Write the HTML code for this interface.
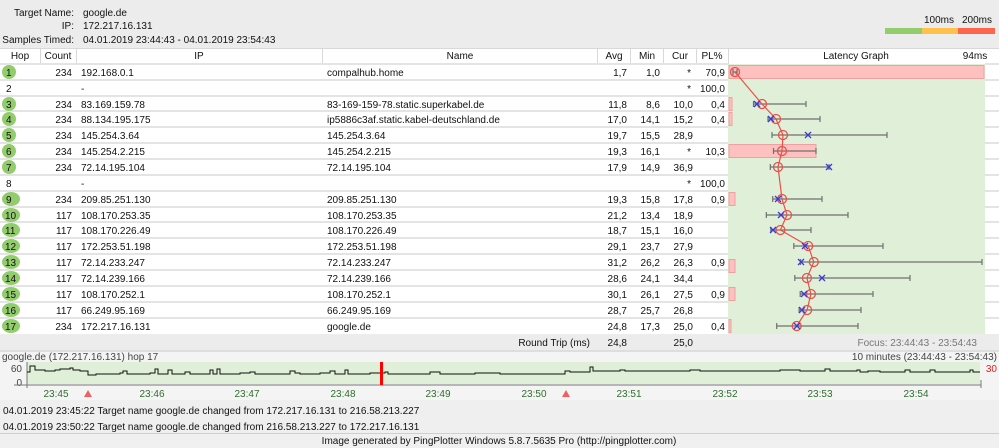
<!DOCTYPE html>
<html><head><meta charset="utf-8"><style>
html,body{margin:0;padding:0;background:#ececec;}
svg{display:block;font-family:"Liberation Sans",Arial,sans-serif;font-size:10px;}
</style></head><body>
<svg width="999" height="448" viewBox="0 0 999 448" xmlns="http://www.w3.org/2000/svg">
<rect width="999" height="448" fill="#ececec"/>
<!-- header info -->
<g fill="#111">
<text x="74" y="16" text-anchor="end">Target Name:</text><text x="83" y="16">google.de</text>
<text x="74" y="29" text-anchor="end">IP:</text><text x="83" y="29">172.217.16.131</text>
<text x="74" y="43" text-anchor="end">Samples Timed:</text><text x="83" y="43">04.01.2019 23:44:43 - 04.01.2019 23:54:43</text>
<text x="939" y="23" text-anchor="middle">100ms</text><text x="977" y="23" text-anchor="middle">200ms</text>
</g>
<rect x="885" y="28" width="37" height="6" fill="#92cc6c"/><rect x="922" y="28" width="36" height="6" fill="#ffc04c"/><rect x="958" y="28" width="37" height="6" fill="#ff644c"/>
<!-- table header -->
<rect x="0" y="48" width="999" height="16" fill="#fff"/>
<line x1="0" y1="48.5" x2="999" y2="48.5" stroke="#d8d8d8"/>
<g stroke="#d8d8d8"><line x1="40.5" y1="48" x2="40.5" y2="64"/><line x1="76.5" y1="48" x2="76.5" y2="64"/><line x1="322.5" y1="48" x2="322.5" y2="64"/><line x1="597.5" y1="48" x2="597.5" y2="64"/><line x1="630.5" y1="48" x2="630.5" y2="64"/><line x1="663.5" y1="48" x2="663.5" y2="64"/><line x1="696.5" y1="48" x2="696.5" y2="64"/><line x1="728.5" y1="48" x2="728.5" y2="64"/></g>
<g fill="#111" text-anchor="middle">
<text x="20" y="59">Hop</text><text x="58" y="59">Count</text><text x="199" y="59">IP</text><text x="460" y="59">Name</text><text x="614" y="59">Avg</text><text x="647" y="59">Min</text><text x="680" y="59">Cur</text><text x="712" y="59">PL%</text><text x="856" y="59">Latency Graph</text><text x="975" y="59">94ms</text>
</g>
<!-- body -->
<rect x="0" y="64" width="999" height="270" fill="#fff"/>
<rect x="728" y="64" width="257" height="270" fill="#e0f0d8"/>
<g stroke="#e4e4e4" stroke-width="2">
<line x1="0" y1="64" x2="728" y2="64"/><line x1="0" y1="80" x2="728" y2="80"/><line x1="0" y1="96" x2="728" y2="96"/><line x1="0" y1="111" x2="728" y2="111"/><line x1="0" y1="127" x2="728" y2="127"/><line x1="0" y1="143" x2="728" y2="143"/><line x1="0" y1="159" x2="728" y2="159"/><line x1="0" y1="175" x2="728" y2="175"/><line x1="0" y1="191" x2="728" y2="191"/><line x1="0" y1="207" x2="728" y2="207"/><line x1="0" y1="222" x2="728" y2="222"/><line x1="0" y1="238" x2="728" y2="238"/><line x1="0" y1="254" x2="728" y2="254"/><line x1="0" y1="270" x2="728" y2="270"/><line x1="0" y1="286" x2="728" y2="286"/><line x1="0" y1="302" x2="728" y2="302"/><line x1="0" y1="318" x2="728" y2="318"/>
<line x1="985" y1="64" x2="999" y2="64"/><line x1="985" y1="80" x2="999" y2="80"/><line x1="985" y1="96" x2="999" y2="96"/><line x1="985" y1="111" x2="999" y2="111"/><line x1="985" y1="127" x2="999" y2="127"/><line x1="985" y1="143" x2="999" y2="143"/><line x1="985" y1="159" x2="999" y2="159"/><line x1="985" y1="175" x2="999" y2="175"/><line x1="985" y1="191" x2="999" y2="191"/><line x1="985" y1="207" x2="999" y2="207"/><line x1="985" y1="222" x2="999" y2="222"/><line x1="985" y1="238" x2="999" y2="238"/><line x1="985" y1="254" x2="999" y2="254"/><line x1="985" y1="270" x2="999" y2="270"/><line x1="985" y1="286" x2="999" y2="286"/><line x1="985" y1="302" x2="999" y2="302"/><line x1="985" y1="318" x2="999" y2="318"/>
</g>
<!-- hop circles -->
<g fill="#92cc6c">
<ellipse cx="9" cy="72" rx="7" ry="7"/><ellipse cx="9" cy="104" rx="7" ry="7"/><ellipse cx="9" cy="119" rx="7" ry="7"/><ellipse cx="9" cy="135" rx="7" ry="7"/><ellipse cx="9" cy="151" rx="7" ry="7"/><ellipse cx="9" cy="167" rx="7" ry="7"/><ellipse cx="11" cy="199" rx="9" ry="7"/><ellipse cx="11" cy="215" rx="9" ry="7"/><ellipse cx="11" cy="230" rx="9" ry="7"/><ellipse cx="11" cy="246" rx="9" ry="7"/><ellipse cx="11" cy="262" rx="9" ry="7"/><ellipse cx="11" cy="278" rx="9" ry="7"/><ellipse cx="11" cy="294" rx="9" ry="7"/><ellipse cx="11" cy="310" rx="9" ry="7"/><ellipse cx="11" cy="326" rx="9" ry="7"/>
</g>
<g fill="#111">
<text x="6" y="76">1</text><text x="6" y="92">2</text><text x="6" y="108">3</text><text x="6" y="123">4</text><text x="6" y="139">5</text><text x="6" y="155">6</text><text x="6" y="171">7</text><text x="6" y="187">8</text><text x="6" y="203">9</text><text x="5" y="219">10</text><text x="5" y="234">11</text><text x="5" y="250">12</text><text x="5" y="266">13</text><text x="5" y="282">14</text><text x="5" y="298">15</text><text x="5" y="314">16</text><text x="5" y="330">17</text>
</g>
<g fill="#111" text-anchor="end">
<text x="72" y="76">234</text><text x="72" y="108">234</text><text x="72" y="123">234</text><text x="72" y="139">234</text><text x="72" y="155">234</text><text x="72" y="171">234</text><text x="72" y="203">234</text><text x="72" y="219">117</text><text x="72" y="234">117</text><text x="72" y="250">117</text><text x="72" y="266">117</text><text x="72" y="282">117</text><text x="72" y="298">117</text><text x="72" y="314">117</text><text x="72" y="330">234</text>
</g>
<g fill="#111">
<text x="81" y="76">192.168.0.1</text><text x="81" y="92">-</text><text x="81" y="108">83.169.159.78</text><text x="81" y="123">88.134.195.175</text><text x="81" y="139">145.254.3.64</text><text x="81" y="155">145.254.2.215</text><text x="81" y="171">72.14.195.104</text><text x="81" y="187">-</text><text x="81" y="203">209.85.251.130</text><text x="81" y="219">108.170.253.35</text><text x="81" y="234">108.170.226.49</text><text x="81" y="250">172.253.51.198</text><text x="81" y="266">72.14.233.247</text><text x="81" y="282">72.14.239.166</text><text x="81" y="298">108.170.252.1</text><text x="81" y="314">66.249.95.169</text><text x="81" y="330">172.217.16.131</text>
<text x="327" y="76">compalhub.home</text><text x="327" y="108">83-169-159-78.static.superkabel.de</text><text x="327" y="123">ip5886c3af.static.kabel-deutschland.de</text><text x="327" y="139">145.254.3.64</text><text x="327" y="155">145.254.2.215</text><text x="327" y="171">72.14.195.104</text><text x="327" y="203">209.85.251.130</text><text x="327" y="219">108.170.253.35</text><text x="327" y="234">108.170.226.49</text><text x="327" y="250">172.253.51.198</text><text x="327" y="266">72.14.233.247</text><text x="327" y="282">72.14.239.166</text><text x="327" y="298">108.170.252.1</text><text x="327" y="314">66.249.95.169</text><text x="327" y="330">google.de</text>
</g>
<g fill="#111" text-anchor="end">
<text x="627" y="76">1,7</text><text x="660" y="76">1,0</text><text x="691" y="76">*</text><text x="725" y="76">70,9</text>
<text x="691" y="92">*</text><text x="725" y="92">100,0</text>
<text x="627" y="108">11,8</text><text x="660" y="108">8,6</text><text x="693" y="108">10,0</text><text x="725" y="108">0,4</text>
<text x="627" y="123">17,0</text><text x="660" y="123">14,1</text><text x="693" y="123">15,2</text><text x="725" y="123">0,4</text>
<text x="627" y="139">19,7</text><text x="660" y="139">15,5</text><text x="693" y="139">28,9</text>
<text x="627" y="155">19,3</text><text x="660" y="155">16,1</text><text x="691" y="155">*</text><text x="725" y="155">10,3</text>
<text x="627" y="171">17,9</text><text x="660" y="171">14,9</text><text x="693" y="171">36,9</text>
<text x="691" y="187">*</text><text x="725" y="187">100,0</text>
<text x="627" y="203">19,3</text><text x="660" y="203">15,8</text><text x="693" y="203">17,8</text><text x="725" y="203">0,9</text>
<text x="627" y="219">21,2</text><text x="660" y="219">13,4</text><text x="693" y="219">18,9</text>
<text x="627" y="234">18,7</text><text x="660" y="234">15,1</text><text x="693" y="234">16,0</text>
<text x="627" y="250">29,1</text><text x="660" y="250">23,7</text><text x="693" y="250">27,9</text>
<text x="627" y="266">31,2</text><text x="660" y="266">26,2</text><text x="693" y="266">26,3</text><text x="725" y="266">0,9</text>
<text x="627" y="282">28,6</text><text x="660" y="282">24,1</text><text x="693" y="282">34,4</text>
<text x="627" y="298">30,1</text><text x="660" y="298">26,1</text><text x="693" y="298">27,5</text><text x="725" y="298">0,9</text>
<text x="627" y="314">28,7</text><text x="660" y="314">25,7</text><text x="693" y="314">26,8</text>
<text x="627" y="330">24,8</text><text x="660" y="330">17,3</text><text x="693" y="330">25,0</text><text x="725" y="330">0,4</text>
</g>
<!-- latency graph -->
<g fill="#ffc0c0" stroke="#f0a0a0">
<rect x="729" y="65.5" width="255" height="13"/><rect x="729" y="97.5" width="3" height="13"/><rect x="729" y="112.5" width="3" height="13"/><rect x="729" y="144.5" width="87" height="13"/><rect x="729" y="192.5" width="6" height="13"/><rect x="729" y="259.5" width="6" height="13"/><rect x="729" y="287.5" width="6" height="13"/><rect x="729" y="319.5" width="2" height="13"/>
</g>
<g stroke="#707070" stroke-width="1.2">
<path d="M733 72H737M733 69V75M737 69V75"/>
<path d="M753.5 104H806M753.5 101V107M806 101V107"/>
<path d="M768 119H820M768 116V122M820 116V122"/>
<path d="M772 135H887M772 132V138M887 132V138"/>
<path d="M773.5 151H816M773.5 148V154M816 148V154"/>
<path d="M770.3 167H829M770.3 164V170M829 164V170"/>
<path d="M772.7 199H822M772.7 196V202M822 196V202"/>
<path d="M766.3 215H848M766.3 212V218M848 212V218"/>
<path d="M770.8 230H811M770.8 227V233M811 227V233"/>
<path d="M793.8 246H883M793.8 243V249M883 243V249"/>
<path d="M800.5 262H982M800.5 259V265M982 259V265"/>
<path d="M794.8 278H910M794.8 275V281M910 275V281"/>
<path d="M800.2 294H873M800.2 291V297M873 291V297"/>
<path d="M799.1 310H861M799.1 307V313M861 307V313"/>
<path d="M776.7 326H858M776.7 323V329M858 323V329"/>
</g>
<polyline fill="none" stroke="#e8504a" stroke-width="1.2" points="735,72 762,104 776,119 783,135 782,151 778,167 782,199 787,215 780.4,230 808.2,246 813.8,262 806.9,278 810.9,294 807.1,310 796.7,326"/>
<g fill="none" stroke="#e8504a" stroke-width="1.3">
<circle cx="735" cy="72" r="4.5"/><circle cx="762" cy="104" r="4.5"/><circle cx="776" cy="119" r="4.5"/><circle cx="783" cy="135" r="4.5"/><circle cx="782" cy="151" r="4.5"/><circle cx="778" cy="167" r="4.5"/><circle cx="782" cy="199" r="4.5"/><circle cx="787" cy="215" r="4.5"/><circle cx="780.4" cy="230" r="4.5"/><circle cx="808.2" cy="246" r="4.5"/><circle cx="813.8" cy="262" r="4.5"/><circle cx="806.9" cy="278" r="4.5"/><circle cx="810.9" cy="294" r="4.5"/><circle cx="807.1" cy="310" r="4.5"/><circle cx="796.7" cy="326" r="4.5"/>
</g>
<g stroke="#3a3ad8" stroke-width="1.3">
<path d="M754 101l6 6M760 101l-6 6"/><path d="M768 116l6 6M774 116l-6 6"/><path d="M805 132l6 6M811 132l-6 6"/><path d="M826 164l6 6M832 164l-6 6"/><path d="M775 196l6 6M781 196l-6 6"/><path d="M778 212l6 6M784 212l-6 6"/><path d="M770 227l6 6M776 227l-6 6"/><path d="M802 243l6 6M808 243l-6 6"/><path d="M798 259l6 6M804 259l-6 6"/><path d="M819 275l6 6M825 275l-6 6"/><path d="M801 291l6 6M807 291l-6 6"/><path d="M799 307l6 6M805 307l-6 6"/><path d="M794 323l6 6M800 323l-6 6"/>
</g>
<!-- round trip -->
<g fill="#111" text-anchor="end">
<text x="590" y="346">Round Trip (ms)</text><text x="627" y="346">24,8</text><text x="693" y="346">25,0</text>
</g>
<text x="977" y="346" text-anchor="end" fill="#777">Focus: 23:44:43 - 23:54:43</text>
<line x1="0" y1="351" x2="999" y2="351" stroke="#d0d0d0"/>
<rect x="0" y="352" width="999" height="48" fill="#f4f4f4"/>
<text x="2" y="360" fill="#444">google.de (172.217.16.131) hop 17</text>
<text x="997" y="360" text-anchor="end" fill="#444">10 minutes (23:44:43 - 23:54:43)</text>
<rect x="27" y="362" width="953" height="22" fill="#e0f0d8"/>
<text x="22" y="372" text-anchor="end" fill="#444">60</text><text x="22" y="386" text-anchor="end" fill="#444">0</text>
<text x="997" y="372" text-anchor="end" fill="#e02020">30</text>
<path d="M14 385H981M27 362V388M981 380V388" stroke="#777" fill="none"/>
<path fill="none" stroke="#111" stroke-width="1" d="M27 372H30V366H35V370H45V371H55V370H60V369H70V368H73V370H80V371H88V375H96V374H120V373H123V371H127V374H150V373H155V369H158V374H168V370H172V374H185V372H190V374H210V370H213V374H217V369H220V374H240V373H250V372H255V374H290V371H295V373H300V374H320V373H330V371H335V374H345V370H348V374H370V373H385V372H388V374H430V372H440V374H475V373H500V374H565V371H570V372H590V367H593V371H620V370H625V371H690V370H700V371H780V370H800V371H825V369H830V371H857V370H860V372H868V371H880V372H905V370H910V372H930V370H935V372H970V370H973V372H980"/>
<rect x="380" y="362" width="3" height="23" fill="#ff0000"/>
<path d="M88 390l-4 7h8zM566 390l-4 7h8z" fill="#f06060"/>
<g fill="#2e6e2e" text-anchor="middle">
<text x="56" y="397">23:45</text><text x="152" y="397">23:46</text><text x="247" y="397">23:47</text><text x="343" y="397">23:48</text><text x="438" y="397">23:49</text><text x="534" y="397">23:50</text><text x="629" y="397">23:51</text><text x="725" y="397">23:52</text><text x="820" y="397">23:53</text><text x="916" y="397">23:54</text>
</g>
<rect x="0" y="400" width="999" height="33" fill="#efefef"/>
<g fill="#111">
<text x="3" y="414">04.01.2019 23:45:22 Target name google.de changed from 172.217.16.131 to 216.58.213.227</text>
<text x="3" y="430">04.01.2019 23:50:22 Target name google.de changed from 216.58.213.227 to 172.217.16.131</text>
</g>
<line x1="0" y1="433.5" x2="999" y2="433.5" stroke="#cfcfcf"/>
<rect x="0" y="434" width="999" height="14" fill="#f0f0f0"/>
<text x="499" y="444" text-anchor="middle" fill="#111">Image generated by PingPlotter Windows 5.8.7.5635 Pro (http://pingplotter.com)</text>
</svg>
</body></html>
